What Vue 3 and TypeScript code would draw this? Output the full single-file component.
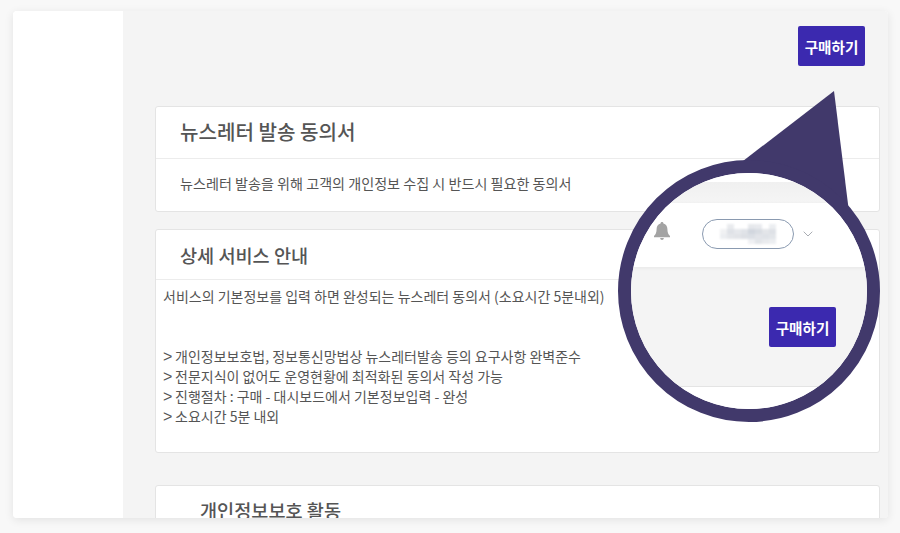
<script setup lang="ts">
const bullets: string[] = [
  '개인정보보호법, 정보통신망법상 뉴스레터발송 등의 요구사항 완벽준수',
  '전문지식이 없어도 운영현황에 최적화된 동의서 작성 가능',
  '진행절차 : 구매 - 대시보드에서 기본정보입력 - 완성',
  '소요시간 5분 내외',
]

// Pixelated (mosaic) name inside the pill: [x, y, shade]
const mosaic: [number, number, string][] = [
  [0, 1, '#f0f1f3'], [0, 2, '#eceef1'],
  [1, 0, '#e9ebee'], [1, 1, '#dfe2e7'], [1, 2, '#e4e6ea'],
  [2, 1, '#e6e8ec'], [2, 2, '#e2e4e8'],
  [3, 1, '#e0e3e8'], [3, 2, '#dde0e5'],
  [4, 0, '#e6e8ec'], [4, 1, '#d1d6de'], [4, 2, '#dbdfe5'], [4, 3, '#eff0f3'],
  [5, 0, '#e8eaee'], [5, 1, '#d8dce2'], [5, 2, '#e2e4e9'], [5, 3, '#e2e5e9'],
  [6, 1, '#e3e5e9'], [6, 2, '#dfe2e7'], [6, 3, '#e9ebee'],
  [7, 0, '#eceef1'], [7, 1, '#dee1e6'], [7, 2, '#e2e5e9'], [7, 3, '#eceef1'],
]
</script>

<template>
  <div class="page">
    <div class="window">
      <aside class="sidebar"></aside>
      <main class="main">
        <div class="toolbar">
          <button class="buy">구매하기</button>
        </div>
        <section class="card first">
          <h2 class="title">뉴스레터 발송 동의서</h2>
          <p class="desc">뉴스레터 발송을 위해 고객의 개인정보 수집 시 반드시 필요한 동의서</p>
        </section>
        <section class="card second">
          <h2 class="title small">상세 서비스 안내</h2>
          <div class="body">
            <p class="intro">서비스의 기본정보를 입력 하면 완성되는 뉴스레터 동의서 (소요시간 5분내외)</p>
            <ul class="list">
              <li v-for="b in bullets" :key="b"><span class="gt">&gt;</span>{{ b }}</li>
            </ul>
          </div>
        </section>
        <section class="card third">
          <h2 class="title small third-title">개인정보보호 활동</h2>
        </section>
      </main>
    </div>

    <svg class="pointer" width="900" height="533" viewBox="0 0 900 533">
      <polygon points="834,91 743,161 849,212" fill="#41396b" />
    </svg>
    <div class="lens">
      <div class="lens-inner">
        <div class="lens-top"></div>
        <div class="lens-gap"></div>
        <div class="lens-header">
          <svg class="bell" width="18" height="19" viewBox="0 0 18 19">
            <path d="M9 0c.9 0 1.400.6 1.400 1.400C13 2.100 14.400 4.200 14.400 7c0 3.400.9 5.600 2.600 7v1.200H1V14c1.700-1.400 2.600-3.600 2.600-7 0-2.800 1.400-4.900 4-5.600C7.600.6 8.100 0 9 0z" fill="#a3a3a3" />
            <path d="M7.200 16h3.600c0 1.300-.8 2-1.800 2s-1.800-.7-1.800-2z" fill="#a3a3a3" />
          </svg>
          <div class="pill">
            <svg class="mosaic" width="56" height="20" viewBox="0 0 56 20">
              <rect v-for="m in mosaic" :key="m[0] + '-' + m[1]" :x="m[0] * 7" :y="m[1] * 5" width="7" height="5" :fill="m[2]" />
            </svg>
          </div>
          <svg class="chev" width="10" height="6" viewBox="0 0 10 6">
            <path d="M.7.700 5 5 9.300.700" fill="none" stroke="#a9adb3" stroke-width="1" />
          </svg>
        </div>
        <div class="lens-gray">
          <button class="buy lens-buy">구매하기</button>
        </div>
        <div class="lens-bottom"></div>
      </div>
    </div>
  </div>
</template>

<style>
html, body { margin: 0; padding: 0; }
</style>

<style scoped>
.page {
  position: relative;
  width: 900px;
  height: 533px;
  box-sizing: border-box;
  padding: 11px 12px 15px 13px;
  background: #f8f8f8;
  overflow: hidden;
  font-family: "Noto Sans CJK KR", "Noto Sans", sans-serif;
}
.window {
  display: flex;
  height: 100%;
  border-radius: 4px;
  overflow: hidden;
  box-shadow: 0 2px 10px rgba(0, 0, 0, 0.09);
  background: #fff;
}
.sidebar {
  flex: 0 0 110px;
  background: #fff;
}
.main {
  flex: 1;
  min-width: 0;
  background: #f4f4f4;
  padding: 15px 8px 0 32px;
  overflow: hidden;
}
.toolbar {
  display: flex;
  justify-content: flex-end;
  padding-right: 15px;
  height: 80px;
}
.buy {
  width: 67px;
  height: 40px;
  padding: 0;
  border: 0;
  border-radius: 2px;
  background: #3b29af;
  color: #fff;
  font: 700 14.6px "Noto Sans CJK KR", sans-serif;
}
.card {
  background: #fff;
  border: 1px solid #e4e4e4;
  border-radius: 3px;
  color: #555;
}
.first { height: 106px; margin-bottom: 17px; box-sizing: border-box; }
.second { height: 224px; margin-bottom: 32px; box-sizing: border-box; }
.third { height: 60px; box-sizing: border-box; }
.title {
  margin: 0;
  padding: 0 24px;
  height: 51px;
  line-height: 50px;
  font-size: 20.1px;
  font-weight: 500;
  color: #555;
  border-bottom: 1px solid #ececec;
}
.title.small { height: 49px; line-height: 49px; font-size: 18.6px; }
.title.third-title {
  border: 0;
  padding-left: 44px;
  height: auto;
  line-height: 48px;
}
.desc {
  margin: 0;
  padding: 14px 24px 0;
  font-size: 14.1px;
  line-height: 20px;
  color: #555;
}
.body { padding: 6px 7px 0; }
.intro {
  margin: 0 0 40px;
  font-size: 14px;
  line-height: 20px;
  color: #555;
}
.list {
  list-style: none;
  margin: 0;
  padding: 0;
  font-size: 14px;
  line-height: 20px;
  color: #555;
}
.gt {
  display: inline-block;
  width: 12px;
  font-family: "Liberation Sans", sans-serif;
  font-size: 16px;
  line-height: 16px;
}
.pointer {
  position: absolute;
  left: 0;
  top: 0;
  pointer-events: none;
}
.lens {
  position: absolute;
  left: 618px;
  top: 160px;
  width: 262px;
  height: 262px;
  box-sizing: border-box;
  border: 13px solid #41396b;
  border-radius: 50%;
  overflow: hidden;
  background: #fff;
}
.lens-inner {
  display: flex;
  flex-direction: column;
  height: 100%;
}
.lens-top { flex: 0 0 9px; background: #fff; }
.lens-gap { flex: 0 0 21px; background: linear-gradient(#f0f0f0, #f5f5f5); }
.lens-header {
  flex: 0 0 64px;
  box-sizing: border-box;
  background: #fff;
  display: flex;
  align-items: flex-start;
  padding: 19px 0 0 22px;
  position: relative;
  z-index: 1;
  box-shadow: 0 1px 4px rgba(0, 0, 0, 0.06);
}
.pill {
  margin-left: 31px;
  margin-top: -3px;
  width: 92px;
  height: 30px;
  box-sizing: border-box;
  border: 1px solid #8a9ab0;
  border-radius: 15px;
  display: flex;
  align-items: center;
  justify-content: center;
}
.mosaic {
  display: block;
  filter: blur(1px);
}
.chev { margin: 9px 0 0 9px; }
.lens-gray {
  flex: 0 0 120px;
  background: #f4f4f4;
  display: flex;
  justify-content: flex-end;
  align-items: flex-start;
  padding: 40px 31px 0 0;
  box-sizing: border-box;
  border-bottom: 1px solid #e4e4e4;
}
.lens-bottom { flex: 1; background: #fff; }
</style>
